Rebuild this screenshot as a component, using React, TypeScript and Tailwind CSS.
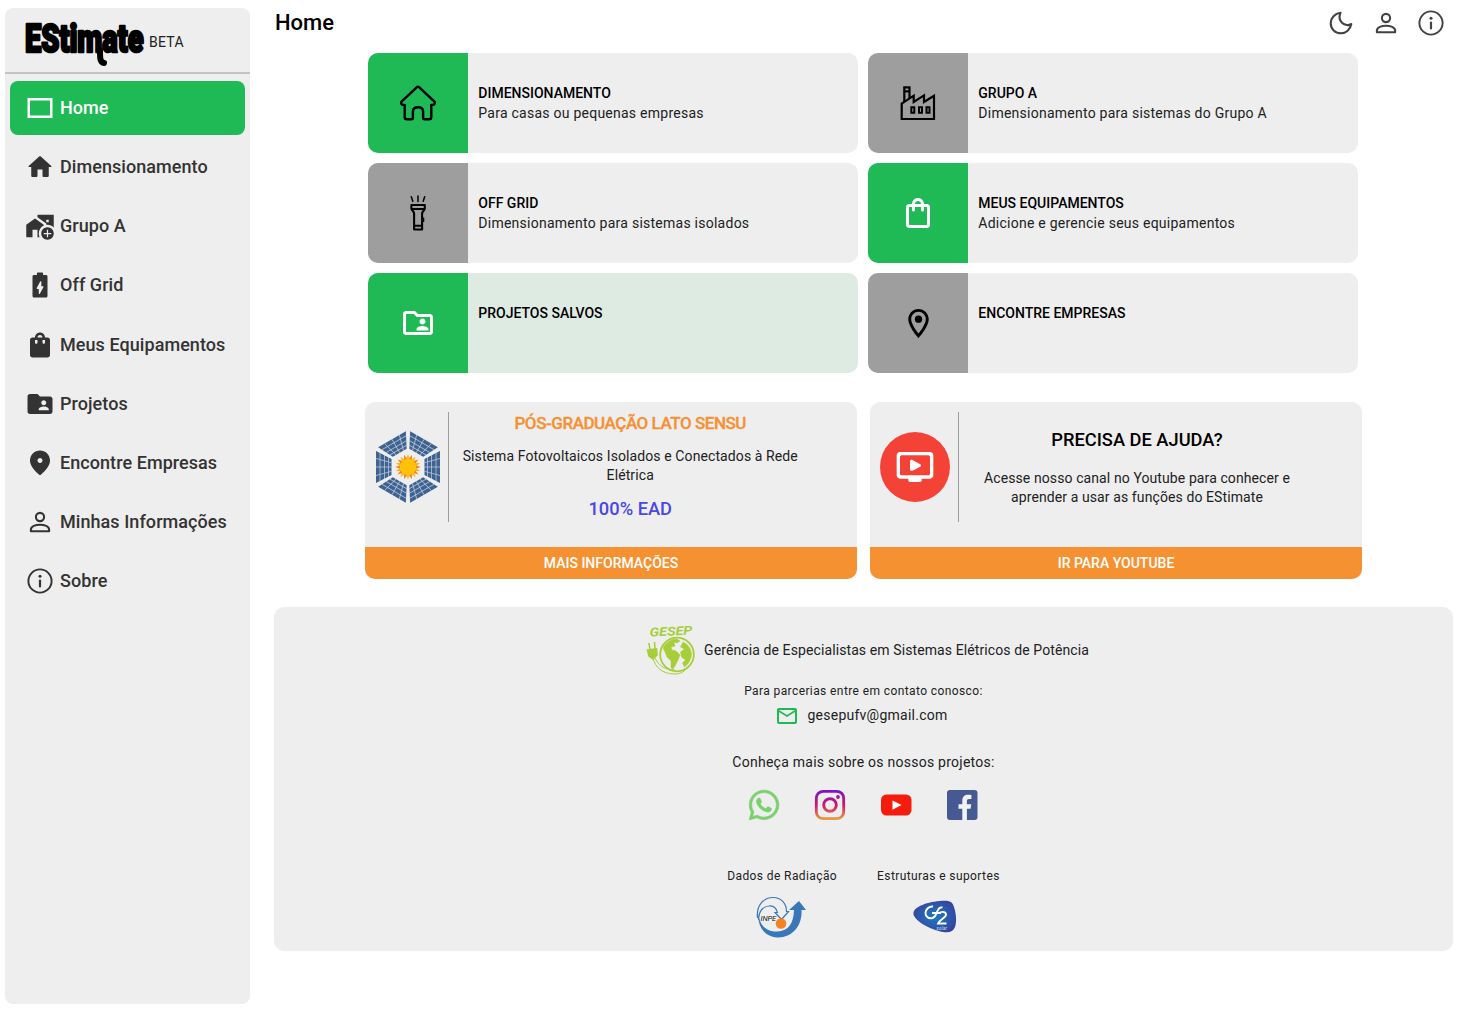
import React from "react";
import {
  MdAddHomeWork,
  MdOutlineFolderShared,
  MdFolderShared,
  MdOutlineLocationOn,
  MdMailOutline,
} from "react-icons/md";
import { FaWhatsapp } from "react-icons/fa";

const Glyph = ({ d, size = 30 }: { d: string; size?: number }) => (
  <svg width={size} height={size} viewBox="0 0 24 24" fill="currentColor" fillRule="evenodd">
    <path d={d} />
  </svg>
);

const InfoIcon = () => (
  <svg width="30" height="30" viewBox="0 0 30 30" fill="none" stroke="currentColor" strokeWidth="1.9">
    <circle cx="15" cy="15" r="11.6" />
    <path d="M15 14.500v6" strokeWidth="2.200" strokeLinecap="round" />
    <circle cx="15" cy="10.200" r="1.500" fill="currentColor" stroke="none" />
  </svg>
);

const PersonIcon = () => (
  <svg width="30" height="30" viewBox="0 0 30 30" fill="none" stroke="currentColor" strokeWidth="2.100" strokeLinejoin="round">
    <circle cx="15" cy="10" r="4.100" />
    <path d="M5.900 22.500c0-3.200 4.700-4.800 9.100-4.800s9.100 1.600 9.100 4.800v1.700H5.900z" />
  </svg>
);

const MoonIcon = () => (
  <svg width="30" height="30" viewBox="0 0 30 30" fill="none" stroke="currentColor" strokeWidth="2.100" strokeLinejoin="round">
    <path d="M14.500 4.800C9 5.500 4.700 9.800 4.700 15.300c0 5.700 4.600 10 10.300 10 5 0 9.300-3.600 10.300-9.300-2.300 1.500-6.500 1.700-9.300-1.200-2.700-2.800-2.900-6.700-1.500-10z" />
  </svg>
);

const bagTop =
  "M18 6h-2c0-2.21-1.79-4-4-4S8 3.79 8 6H6c-1.1 0-2 .9-2 2v12c0 1.1.9 2 2 2h12c1.1 0 2-.9 2-2V8c0-1.1-.9-2-2-2z";

const nav: { label: string; icon: React.ReactNode }[] = [
  { label: "Home", icon: <Glyph d="M2 4v16h20V4H2zm18 14H4V6h16v12z" /> },
  {
    label: "Dimensionamento",
    icon: (
      <Glyph d="M10 19v-5h4v5c0 .55.45 1 1 1h3c.55 0 1-.45 1-1v-7h1.7c.46 0 .68-.57.33-.87L12.67 3.6c-.38-.34-.96-.34-1.34 0l-8.36 7.53c-.34.3-.13.87.33.87H5v7c0 .55.45 1 1 1h3c.55 0 1-.45 1-1z" />
    ),
  },
  { label: "Grupo A", icon: <MdAddHomeWork size={30} /> },
  {
    label: "Off Grid",
    icon: (
      <Glyph d="M16.800 4H14.500V3c0-.6-.4-1-1-1h-3c-.6 0-1 .4-1 1v1H7.200C6.500 4 6 4.500 6 5.200v15.600c0 .7.500 1.200 1.200 1.200h9.600c.7 0 1.200-.5 1.200-1.200V5.200c0-.7-.5-1.200-1.200-1.200zM14.700 13.700l-2.800 5.200c-.25.460-.900.280-.900-.240V15.200H9.800c-.380 0-.620-.400-.440-.730l2.800-5.200c.250-.460.940-.280.940.240V12.900h1.200c.370 0 .610.400.400.800z" />
    ),
  },
  {
    label: "Meus Equipamentos",
    icon: (
      <Glyph
        d={
          bagTop +
          "M10 10c0 .55-.45 1-1 1s-1-.45-1-1V8h2zM12 4c1.1 0 2 .9 2 2h-4c0-1.1.9-2 2-2zM16 10c0 .55-.45 1-1 1s-1-.45-1-1V8h2z"
        }
      />
    ),
  },
  { label: "Projetos", icon: <MdFolderShared size={30} /> },
  {
    label: "Encontre Empresas",
    icon: (
      <Glyph d="M12 2c-4.2 0-8 3.22-8 8.2 0 3.18 2.45 6.92 7.34 11.23.38.33.95.33 1.33 0C17.55 17.12 20 13.38 20 10.2 20 5.22 16.2 2 12 2zm0 10c-1.1 0-2-.9-2-2s.9-2 2-2 2 .9 2 2-.9 2-2 2z" />
    ),
  },
  { label: "Minhas Informações", icon: <PersonIcon /> },
  { label: "Sobre", icon: <InfoIcon /> },
];

const HouseIcon = () => (
  <svg width="36" height="36" viewBox="0 0 36 36" fill="none" stroke="#000" strokeWidth="2.400" strokeLinejoin="round">
    <path d="M16.700 2.300a1.900 1.900 0 0 1 2.600 0L34.200 16.400c1.400 1.500.6 3.300-1.200 3.500H31.300V32c0 1.500-.8 2.300-2.300 2.300H24.600c-1 0-1.500-.5-1.500-1.500V26.500c0-2.900-1.700-4.300-5.100-4.300s-5.100 1.400-5.100 4.300v6.300c0 1-.5 1.500-1.500 1.500H7c-1.500 0-2.300-.8-2.300-2.300V19.900H3c-1.800-.2-2.600-2-1.200-3.500z" />
  </svg>
);

const FactoryIcon = () => (
  <svg width="36" height="36" viewBox="0 0 36 36" fill="none" stroke="#000" strokeWidth="2.200">
    <path d="M1.700 34V18.500L13.700 10.700v6.300l10.300-6.600v6.600l10-6.300V34z" />
    <path d="M4.300 17V2.300h5.200V13M4.700 6.300h5" />
    <path d="M11.300 22.300h3v5.400h-3zM19 22.300h3v5.400h-3zM26.500 22.300h3v5.400h-3z" strokeWidth="2" />
  </svg>
);

const FlashlightIcon = () => (
  <svg width="36" height="36" viewBox="0 0 36 36" fill="none" stroke="#000" strokeWidth="2.100" strokeLinejoin="round">
    <path d="M11.300 1.800l1.500 4.400M18 1v5.500M24.700 1.800l-1.500 4.400" strokeWidth="1.500" strokeLinecap="round" />
    <path d="M11.400 10h13.400v3.400c0 1.800-2.700 3-2.700 5V34.500h-8V18.400c0-2-2.700-3.200-2.700-5zM11.400 14h13.400M14.100 30.700h8" />
    <path d="M23 22.500v4.500" strokeWidth="2.500" />
  </svg>
);

const tiles: { title: string; text?: string; on: boolean; tint?: boolean; icon: React.ReactNode }[] = [
  { title: "DIMENSIONAMENTO", text: "Para casas ou pequenas empresas", on: true, icon: <HouseIcon /> },
  { title: "GRUPO A", text: "Dimensionamento para sistemas do Grupo A", on: false, icon: <FactoryIcon /> },
  { title: "OFF GRID", text: "Dimensionamento para sistemas isolados", on: false, icon: <FlashlightIcon /> },
  {
    title: "MEUS EQUIPAMENTOS",
    text: "Adicione e gerencie seus equipamentos",
    on: true,
    icon: (
      <Glyph
        size={36}
        d={
          bagTop +
          "M12 4c1.1 0 2 .9 2 2h-4c0-1.1.9-2 2-2zM18 20H6V8h2v2c0 .55.45 1 1 1s1-.45 1-1V8h4v2c0 .55.45 1 1 1s1-.45 1-1V8h2v12z"
        }
      />
    ),
  },
  { title: "PROJETOS SALVOS", on: true, tint: true, icon: <MdOutlineFolderShared size={36} /> },
  { title: "ENCONTRE EMPRESAS", on: false, icon: <MdOutlineLocationOn size={35} color="#000" /> },
];

/* One trapezoid panel, repeated six times round the sun. */
const SolarLogo = () => (
  <svg width="66" height="72" viewBox="-33 -36 66 72">
    {[0, 60, 120, 180, 240, 300].map((a) => (
      <g key={a} transform={`rotate(${a})`}>
        <path d="M32 -16V16L16.500 8V-8z" fill="#3e6291" />
        <path
          d="M28 -14V14M23.500 -12V12M19.500 -10V10M16.500 0H32M16.500 -4.300L32 -8.500M16.500 4.300L32 8.500"
          stroke="#c9d3e0"
          strokeWidth=".7"
          fill="none"
        />
      </g>
    ))}
    <g>
      {Array.from({ length: 20 }, (_, i) => (
        <path
          key={i}
          d="M-1.900 -7L0 -12.800L1.900 -7z"
          fill={i % 2 ? "#f58220" : "#fbb615"}
          transform={`rotate(${i * 18})`}
        />
      ))}
      <circle r="8.300" fill="#ffc20a" />
    </g>
  </svg>
);

const VideoBadge = () => (
  <div className="flex size-[70px] items-center justify-center rounded-full bg-[#f44336]">
    <svg width="40" height="40" viewBox="0 0 24 24" fill="#fff" fillRule="evenodd">
      <path d="M21 3H3c-1.100 0-2 .9-2 2v12c0 1.100.9 2 2 2h5v1c0 .55.45 1 1 1h6c.55 0 1-.45 1-1v-1h5c1.100 0 2-.9 2-2V5c0-1.100-.9-2-2-2zm-1 14H4c-.55 0-1-.45-1-1V6c0-.55.45-1 1-1h16c.55 0 1 .45 1 1v10c0 .55-.45 1-1 1z" />
      <path d="M9 8.700c0-.8.800-1.200 1.500-.9l4.600 2.500c.7.400.7 1.100 0 1.500l-4.600 2.500c-.7.300-1.500-.1-1.500-.9z" />
    </svg>
  </div>
);

const GesepLogo = () => (
  <svg width="50" height="52" viewBox="0 0 50 52" fill="none" stroke="#a6ce39">
    <text
      x="3.500"
      y="11.500"
      fill="#a6ce39"
      stroke="none"
      fontFamily="Roboto, sans-serif"
      fontSize="12"
      fontWeight="700"
      fontStyle="italic"
      textLength="43"
      lengthAdjust="spacingAndGlyphs"
      transform="rotate(-3 25 8)"
    >
      GESEP
    </text>
    <circle cx="31" cy="30.500" r="16.800" strokeWidth="1.800" />
    <path
      d="M17 24c3-6 9-9.500 14-9l3 2-3 2-3-1 1 4-4 1 1 3 4 1 4 4-2 5-3 6-2 3-2-1v-7l-4-4-2-5zM37 18c5 2 8 7 8.500 12-.5 6-3 10-7 13l-2-4 3-3-4-3-1-5 4-3-4-2z"
      fill="#a6ce39"
      strokeWidth=".5"
    />
    <path d="M3 19l1 7M8.500 18l.5 7M1.500 26l9-1 .5 6-4 4-4-3z" fill="#a6ce39" strokeWidth="1.600" />
    <path d="M7 34c2 9 9 16 22 16 6 0 10-3 12-6M9 34c4 8 10 12 20 12" strokeWidth="1" />
  </svg>
);

const InstagramLogo = () => (
  <svg width="32" height="32" viewBox="0 0 32 32" fill="none" stroke="url(#insta)">
    <defs>
      <linearGradient id="insta" gradientUnits="userSpaceOnUse" x1="16" y1="1" x2="16" y2="31">
        <stop offset="0" stopColor="#7a12c9" />
        <stop offset=".5" stopColor="#c9196f" />
        <stop offset="1" stopColor="#eba43c" />
      </linearGradient>
    </defs>
    <rect x="2.300" y="2.300" width="27.400" height="27.400" rx="7" strokeWidth="2.800" />
    <circle cx="16" cy="16" r="6.300" strokeWidth="2.900" />
    <circle cx="24" cy="8" r="1.900" fill="url(#insta)" stroke="none" />
  </svg>
);

const YoutubeLogo = () => (
  <svg width="32" height="32" viewBox="0 0 32 32">
    <rect x="1" y="5.500" width="30.500" height="21" rx="5.500" fill="#f61c0d" />
    <path d="M12.500 11.500v9.200l9-4.600z" fill="#fff" />
  </svg>
);

const FacebookLogo = () => (
  <svg width="32" height="32" viewBox="0 0 32 32">
    <rect x="1" y="1" width="30.500" height="30" rx="3" fill="#475993" />
    <path
      d="M16.300 31V19.700h-3.800v-4.500h3.800v-3.600c0-3.900 2.400-5.900 5.900-5.900 1.500 0 2.700.1 3.200.2v4h-2.300c-1.800 0-2.200.9-2.200 2.200v3.100h4.300l-.6 4.500h-3.700V31z"
      fill="#f2f2f2"
    />
  </svg>
);

const InpeLogo = () => (
  <svg width="52" height="42" viewBox="0 0 52 42" fill="none">
    <path
      d="M2.500 17C3 30 11 35.500 21 35.500 33 35 37.500 27 38 14h-5L43 5l7 9h-4.500C46.500 30 36 42 21.500 41.500 9 41 1 31 2.500 17z"
      fill="#3878b8"
    />
    <path
      d="M1.500 22C0 9 8 1.500 17 1.500c8 0 13.500 5.500 13.500 14h2l-7 8-6.500-7h2.500c-1.500-5-4.500-7-8.500-6.500C7 10.500 3 15 2.500 24"
      stroke="#3878b8"
      strokeWidth="1.200"
    />
    <text x="4.500" y="24.500" fill="#111" fontFamily="Roboto, sans-serif" fontSize="7.500" fontStyle="italic" textLength="16">
      INPE
    </text>
    <circle cx="25" cy="27.500" r="5.300" fill="#f58220" />
  </svg>
);

const GfLogo = () => (
  <svg width="46" height="34" viewBox="0 0 46 34" className="mr-[6px]">
    <defs>
      <radialGradient id="gf" cx=".5" cy=".5" r=".6">
        <stop offset="0" stopColor="#1e7ac4" />
        <stop offset="1" stopColor="#37409a" />
      </radialGradient>
    </defs>
    <path
      d="M1.500 12.500C3 5.500 19 .8 33 .7c6 0 8 2 9.500 8 1.700 6 2.300 13 .5 18.300-1.500 4.500-6 6.200-12 5C18 29.500 0 20 1.500 12.500z"
      fill="url(#gf)"
    />
    <path
      d="M21 6.500c-4-.5-7.500 3-7.500 6.500 0 4 3.500 6 7 5 3-1 3.500-4 5-7 1-2.500 3-4 5-3.500M20 13h9M27 13.500c2-2.500 7-2 7 1 0 3.500-6.500 5-8 9h8.500"
      stroke="#fff"
      strokeWidth="1.900"
      fill="none"
    />
    <text x="24.500" y="29.700" fill="#cfe0f3" fontFamily="Roboto, sans-serif" fontSize="4.500" fontStyle="italic" textLength="11">
      solar
    </text>
  </svg>
);

export default function App() {
  return (
    <div className="flex h-[1011px] w-[1473px] overflow-hidden bg-white font-['Roboto',sans-serif] text-[#212121]">
      <aside className="ml-[5px] mt-2 flex h-[996px] w-[245px] shrink-0 flex-col rounded-lg bg-[#eeeeee]">
        <div className="flex h-[66px] shrink-0 items-center border-b-2 border-[#c4c4c4] pl-[19px]">
          <svg width="122" height="60" viewBox="0 0 122 60">
            <text
              transform="translate(1 42) scale(.88 1.18)"
              fontFamily="Roboto, sans-serif"
              fontSize="33"
              fontWeight="900"
              stroke="#000"
              strokeWidth="2.200"
              strokeLinejoin="round"
            >
              EStimate
            </text>
            <path d="M76 40c0 9 0 12 4 13" fill="none" stroke="#000" strokeWidth="6" strokeLinecap="round" />
          </svg>
          <span className="ml-[3px] mt-[3px] text-[14px] leading-4 tracking-[0.25px]">BETA</span>
        </div>
        <nav className="flex flex-col gap-[5px] px-[5px] pt-[7.200px]">
          {nav.map((n, i) => (
            <a
              key={n.label}
              className={
                i === 0
                  ? "flex h-[54.080px] items-center gap-[5px] rounded-lg bg-[#1fb955] pl-[15px] text-white"
                  : "flex h-[54.080px] items-center gap-[5px] pl-[15px] text-[#333333]"
              }
            >
              {n.icon}
              <span className="-mt-px text-[18px] font-medium tracking-[0.060px]">{n.label}</span>
            </a>
          ))}
        </nav>
      </aside>

      <main className="flex flex-1 flex-col pl-6 pr-[20px]">
        <header className="flex h-[46px] items-center justify-between pl-px pr-[7px]">
          <h1 className="-mt-0.5 text-[22px] font-medium text-black">Home</h1>
          <div className="flex items-center gap-[15px] text-[#424242]">
            <MoonIcon />
            <PersonIcon />
            <InfoIcon />
          </div>
        </header>

        <section className="mt-[7px] grid grid-cols-[490px_490px] justify-center gap-2.5 pr-px">
          {tiles.map((t) => (
            <article
              key={t.title}
              className={
                t.tint
                  ? "flex h-[100px] overflow-hidden rounded-[10px] bg-[#deebe2]"
                  : "flex h-[100px] overflow-hidden rounded-[10px] bg-[#eeeeee]"
              }
            >
              <div
                className={
                  t.on
                    ? "flex w-[100px] items-center justify-center bg-[#1fb955] text-white"
                    : "flex w-[100px] items-center justify-center bg-[#9e9e9e] text-black"
                }
              >
                {t.icon}
              </div>
              <div className="pl-[10.300px] pt-[30.400px]">
                <h2 className="text-[14px] font-medium leading-5 text-black">{t.title}</h2>
                <p className="text-[14px] leading-5 tracking-[0.25px]">{t.text}</p>
              </div>
            </article>
          ))}
        </section>

        <section className="mt-[29px] grid grid-cols-[492.500px_492.500px] justify-center gap-[12.500px]">
          <article className="flex h-[177px] flex-col overflow-hidden rounded-[10px] bg-[#eeeeee]">
            <div className="flex flex-1">
              <div className="mt-[29px] flex w-[85.500px] justify-center pl-[3px]">
                <SolarLogo />
              </div>
              <div className="mt-[10px] h-[110px] w-[1.500px] bg-[#9e9e9e]" />
              <div className="flex flex-1 flex-col items-center pl-3 pr-[58px] text-center">
                <h3 className="mt-[9px] whitespace-nowrap text-[17px] font-medium leading-6 tracking-[-0.460px] text-[#f69132] [-webkit-text-stroke:0.300px_#f69132]">
                  PÓS-GRADUAÇÃO LATO SENSU
                </h3>
                <p className="mt-[11.500px] w-[338px] text-[14px] leading-[19.500px] tracking-[0.100px]">
                  Sistema Fotovoltaicos Isolados e Conectados à Rede Elétrica
                </p>
                <strong className="mt-[11px] text-[18.300px] font-medium leading-6 text-[#4c46e5]">100% EAD</strong>
              </div>
            </div>
            <button className="h-[32px] bg-[#f69132] pt-px text-[14px] font-medium text-white">MAIS INFORMAÇÕES</button>
          </article>
          <article className="flex h-[177px] flex-col overflow-hidden rounded-[10px] bg-[#eeeeee]">
            <div className="flex flex-1">
              <div className="mt-[29.500px] w-[88px] pl-2.5">
                <VideoBadge />
              </div>
              <div className="mt-[10px] h-[110px] w-px bg-[#9e9e9e]" />
              <div className="flex flex-1 flex-col items-center pr-[47px] text-center">
                <h3 className="mt-[25.500px] text-[18.300px] font-medium leading-6 text-black">PRECISA DE AJUDA?</h3>
                <p className="mt-[17px] w-[310px] text-[14px] leading-[19.500px] tracking-[0.100px]">
                  Acesse nosso canal no Youtube para conhecer e aprender a usar as funções do EStimate
                </p>
              </div>
            </div>
            <button className="h-[32px] bg-[#f69132] pt-px text-[14px] font-medium text-white">IR PARA YOUTUBE</button>
          </article>
        </section>

        <footer className="mt-7 flex h-[342.500px] flex-col items-center rounded-[10px] bg-[#eeeeee] shadow-[0_1px_1px_rgba(0,0,0,0.08)]">
          <div className="mt-[17px] flex items-center gap-2 pl-2">
            <GesepLogo />
            <span className="text-[14px] tracking-[0.100px]">Gerência de Especialistas em Sistemas Elétricos de Potência</span>
          </div>
          <p className="mt-[6.500px] text-[12px] leading-4 tracking-[0.4px]">Para parcerias entre em contato conosco:</p>
          <div className="mt-[5px] flex items-center gap-2 pr-1">
            <MdMailOutline size={24} color="#1fb955" />
            <span className="text-[14px] tracking-[0.25px]">gesepufv@gmail.com</span>
          </div>
          <p className="mt-[24px] text-[14px] leading-5 tracking-[0.250px]">Conheça mais sobre os nossos projetos:</p>
          <div className="mt-[17px] flex gap-[34px] pr-px">
            <FaWhatsapp size={34} color="#7ad06d" stroke="#7ad06d" strokeWidth={10} className="-m-px" />
            <InstagramLogo />
            <YoutubeLogo />
            <FacebookLogo />
          </div>
          <div className="mt-[47px] flex gap-10 text-[12px] leading-4 tracking-[0.4px]">
            <div className="flex flex-col items-center gap-[12px]">
              Dados de Radiação
              <InpeLogo />
            </div>
            <div className="flex flex-col items-center gap-[16px]">
              Estruturas e suportes
              <GfLogo />
            </div>
          </div>
        </footer>
      </main>
    </div>
  );
}
